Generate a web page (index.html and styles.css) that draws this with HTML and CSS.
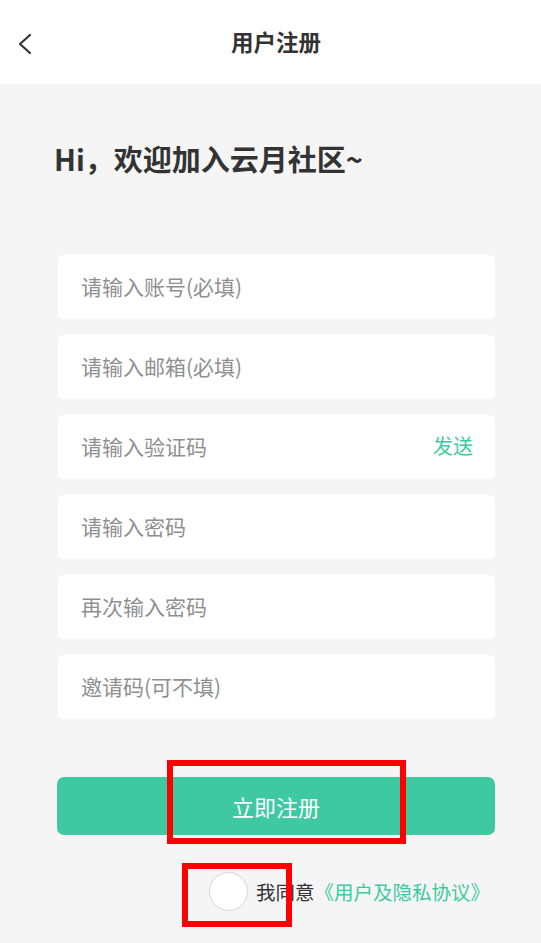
FILE: index.html
```html
<!doctype html>
<html>
   <head>
      <meta charset="utf-8">
      <title>用户注册</title>
      <link rel="stylesheet" href="styles.css">
   </head>
   <body>
      <header class="topbar">
         <a class="back" href="#">
            <svg width="16" height="22" viewBox="0 0 16 22"><path d="M13 2 L3 11 L13 20" fill="none" stroke="#333" stroke-width="2.2" stroke-linecap="round" stroke-linejoin="round"/></svg>
         </a>
         <h1 class="title">用户注册</h1>
      </header>

      <main class="content">
         <h2 class="hello">Hi，欢迎加入云月社区~</h2>

         <form class="form">
            <div class="field"><input type="text" placeholder="请输入账号(必填)"></div>
            <div class="field"><input type="text" placeholder="请输入邮箱(必填)"></div>
            <div class="field">
               <input type="text" placeholder="请输入验证码">
               <span class="send">发送</span>
            </div>
            <div class="field"><input type="password" placeholder="请输入密码"></div>
            <div class="field"><input type="password" placeholder="再次输入密码"></div>
            <div class="field"><input type="text" placeholder="邀请码(可不填)"></div>

            <div class="submit-wrap">
               <button type="button" class="submit">立即注册</button>
               <span class="mark mark-btn"></span>
            </div>

            <div class="agree">
               <span class="check"></span>
               <span class="agree-text">我同意<a href="#">《用户及隐私协议》</a></span>
               <span class="mark mark-check"></span>
            </div>
         </form>
      </main>
   </body>
</html>
```

FILE: styles.css
```css
* {
   margin: 0;
   padding: 0;
   box-sizing: border-box;
}

body {
   font-family: "Noto Sans CJK SC", "Noto Sans", sans-serif;
   background: #f5f5f5;
   color: #333;
   width: 541px;
   min-height: 943px;
}

/* Top bar */
.topbar {
   height: 84px;
   background: #ffffff;
   display: flex;
   align-items: center;
   justify-content: center;
   padding-left: 11px;
   position: relative;
}

.back {
   position: absolute;
   left: 17px;
   top: 33px;
   display: block;
   line-height: 0;
}

.title {
   font-size: 22.5px;
   font-weight: 700;
   color: #333;
   margin-top: -2px;
}

/* Content */
.content {
   padding: 0 46px 0 57px;
}

.hello {
   font-size: 29px;
   font-weight: 700;
   color: #333;
   margin-top: 54px;
   margin-left: -3px;
   line-height: 40px;
}

.form {
   margin-top: 77px;
   display: flex;
   flex-direction: column;
   gap: 16px;
}

.field {
   height: 64px;
   margin-left: 1px;
   background: #ffffff;
   border-radius: 5px;
   display: flex;
   align-items: center;
   padding: 0 22px 3px 23px;
}

.field input {
   flex: 1;
   border: none;
   outline: none;
   background: transparent;
   font-family: inherit;
   font-size: 21px;
   color: #333;
}

.field input::placeholder {
   color: #8f8f8f;
}

.send {
   font-size: 20px;
   color: #3ec9a3;
}

/* Submit */
.submit-wrap {
   position: relative;
   margin-top: 42px;
}

.submit {
   width: 100%;
   height: 58px;
   border: none;
   border-radius: 7px;
   background: #3ec9a3;
   color: #ffffff;
   font-family: inherit;
   font-size: 22px;
}

/* Agreement */
.agree {
   position: relative;
   margin-top: 20px;
   display: flex;
   align-items: center;
   justify-content: flex-end;
   padding-right: 5px;
   height: 40px;
}

.check {
   width: 39px;
   height: 39px;
   border-radius: 50%;
   border: 1.5px solid #d6d6d6;
   background: #ffffff;
   margin-right: 8px;
}

.agree-text {
   font-size: 19.5px;
   color: #333;
}

.agree-text a {
   color: #3ec9a3;
   text-decoration: none;
}

/* Red annotation boxes */
.mark {
   position: absolute;
   border: 6px solid #f00;
   pointer-events: none;
}

.mark-btn {
   left: 110px;
   top: -17px;
   width: 239px;
   height: 84px;
}

.mark-check {
   left: 125px;
   top: -8px;
   width: 110px;
   height: 64px;
}
```
